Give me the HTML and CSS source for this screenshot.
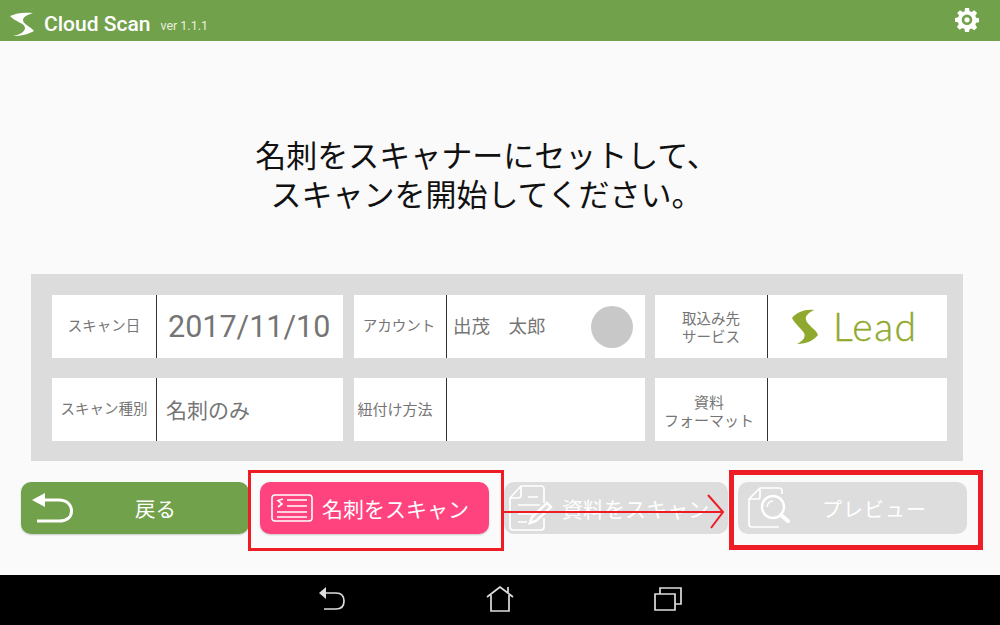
FILE: index.html
```html
<!DOCTYPE html>
<html lang="ja">
<head>
<meta charset="utf-8">
<title>Cloud Scan</title>
<link rel="stylesheet" href="styles.css">
</head>
<body>
<div class="screen">
  <header class="topbar">
    <div class="brand">
      <svg class="logo" viewBox="0 0 24 24"><path fill="#fff" d="M0 4 C6 1 14 0 23 1 C17 3 13 5 13 8 C13 12 20 14 24 19 C19 22 11 24 3 24 C9 23 15 20 15 16 C15 11 5 10 0 4 Z"/></svg>
      <span class="app-name">Cloud Scan</span>
      <span class="version">ver 1.1.1</span>
    </div>
    <svg class="gear" viewBox="0 0 24 24"><path fill="#fff" fill-rule="evenodd" d="M10 0h4l.6 3.2 2 .8L19.300 2.200l2.800 2.800-1.800 2.700.8 2 3.200.6v3.800l-3.200.6-.8 2 1.800 2.700-2.800 2.800-2.700-1.800-2 .8L14 24h-4l-.6-3.200-2-.8-2.700 1.800-2.800-2.800 1.800-2.700-.8-2L0 13.700V9.900l3.200-.6.8-2L2.200 5 5 2.200 7.700 4l2-.8L10 0ZM12 6.500a5.300 5.300 0 1 0 0 10.600a5.300 5.300 0 1 0 0-10.600ZM12 9.200a2.600 2.600 0 1 1 0 5.200a2.600 2.600 0 1 1 0-5.200Z"/></svg>
  </header>

  <main class="content">
    <h1 class="message">名刺をスキャナーにセットして、<br>スキャンを開始してください。</h1>

    <section class="panel">
      <div class="cell">
        <div class="cell-label">スキャン日</div>
        <div class="cell-value date">2017/11/10</div>
      </div>
      <div class="cell cell-narrow">
        <div class="cell-label">アカウント</div>
        <div class="cell-value name"><span>出茂　太郎</span><i class="avatar"></i></div>
      </div>
      <div class="cell cell-wide">
        <div class="cell-label two-line">取込み先<br>サービス</div>
        <div class="cell-value lead">
          <svg class="lead-mark" viewBox="0 0 26 36"><path fill="#8fa92e" d="M0 9 C5 3 13 0 22 1 C16 4 13 7 14 11 C15 16 24 20 26 26 C22 31 15 35 5 35 C11 32 14 28 12 24 C9 19 3 15 0 9 Z"/></svg>
          <span class="lead-word">Lead</span>
        </div>
      </div>
      <div class="cell">
        <div class="cell-label">スキャン種別</div>
        <div class="cell-value kind">名刺のみ</div>
      </div>
      <div class="cell cell-narrow">
        <div class="cell-label link-label">紐付け方法</div>
        <div class="cell-value"></div>
      </div>
      <div class="cell cell-wide">
        <div class="cell-label two-line format-label">資料<br>フォーマット</div>
        <div class="cell-value"></div>
      </div>
    </section>

    <nav class="actions">
      <button class="btn btn-back">
        <svg class="icon-back" viewBox="0 0 41 30"><path fill="none" stroke="#fff" stroke-width="3" d="M11 7H27C35 7 39.500 12 39.500 18C39.500 24 35 28 27 28H5"/><path fill="#fff" d="M0 7L13 0V14Z"/></svg>
        <span>戻る</span>
      </button>
      <button class="btn btn-scan">
        <svg class="icon-card" viewBox="0 0 42 28"><rect x="1" y="1" width="40" height="26" rx="3" fill="none" stroke="#fff" stroke-width="1.600"/><path fill="none" stroke="#fff" stroke-width="1.600" d="M16 6H36M16 12H36M6 18H36M6 23H36M12 5L7 6.500L11 10L7 13"/></svg>
        <span>名刺をスキャン</span>
      </button>
      <button class="btn btn-off btn-doc">
        <svg class="icon-doc" viewBox="0 0 44 46"><path fill="none" stroke="#fff" stroke-width="1.700" d="M35 18V4C35 2 34 1 32 1H12L1 13V42C1 44 2 45 4 45H32C34 45 35 44 35 42V33M12 1V10C12 12 11 13 9 13H1M19 12H29M9 20H31M9 29H24M9 37H18"/><path fill="none" stroke="#fff" stroke-width="2.500" d="M21 38L23 32L38 18L42 22L27 36Z"/></svg>
        <span>資料をスキャン</span>
      </button>
      <button class="btn btn-off btn-preview">
        <svg class="icon-preview" viewBox="0 0 42 42"><path fill="none" stroke="#fff" stroke-width="1.700" d="M34 7V4C34 2 33 1 31 1H12L1 12V37C1 39 2 40 4 40H31M12 1V10C12 11.500 11 12 10 12H1"/><circle cx="25" cy="20" r="11" fill="none" stroke="#fff" stroke-width="2.500"/><path fill="none" stroke="#fff" stroke-width="1.500" d="M19 20C19 16.500 22 14 25 14"/><path stroke="#fff" stroke-width="4" stroke-linecap="round" d="M33 28L40 34"/></svg>
        <span>プレビュー</span>
      </button>
    </nav>
  </main>

  <footer class="navbar">
    <svg class="nav-back" viewBox="0 0 26 24"><path fill="none" stroke="#ddd" stroke-width="1.700" d="M6 6H17C22 6 25 9 25 14C25 19 22 22 17 22H5"/><path fill="#ddd" d="M0 6L7 0V12Z"/></svg>
    <svg class="nav-home" viewBox="0 0 28 26"><path fill="none" stroke="#ddd" stroke-width="1.700" d="M1 11L14 1L27 11M5 9V25H23V9M22 7V1"/></svg>
    <svg class="nav-recent" viewBox="0 0 28 24"><path fill="none" stroke="#ddd" stroke-width="1.700" d="M1 7H21V23H1ZM6 7V1H27V17H21"/></svg>
  </footer>

  <div class="mark mark-scan"></div>
  <div class="mark mark-preview"></div>
  <svg class="mark-arrow" viewBox="0 0 230 50"><path fill="none" stroke="#ee1c25" stroke-width="2" d="M0 25H220M205 8L220 25L208 41"/></svg>
</div>
</body>
</html>
```
FILE: styles.css
```css
* { box-sizing: border-box; }
html, body { margin: 0; padding: 0; }
body { font-family: Roboto, "Noto Sans CJK JP", sans-serif; background: #fafafa; }

.screen {
  position: relative;
  width: 1000px;
  height: 625px;
  display: flex;
  flex-direction: column;
  overflow: hidden;
}

.topbar {
  height: 41px;
  flex: none;
  background: #72a14b;
  display: flex;
  align-items: center;
  justify-content: space-between;
  padding: 0 21px 0 10px;
}
.brand { display: flex; align-items: center; padding-top: 7px; }
.logo { width: 24px; height: 24px; margin-right: 10px; }
.app-name { color: #fff; font-size: 21px; font-weight: 500; margin-right: 10px; }
.version { color: #e6efdd; font-size: 12.500px; margin-top: 3px; }
.gear { width: 24px; height: 24px; margin-top: -1px; }

.content {
  flex: 1;
  display: flex;
  flex-direction: column;
  min-height: 0;
}
.message {
  margin: 96px 0 0;
  height: 137px;
  padding-right: 27px;
  text-align: center;
  font-size: 31px;
  line-height: 39px;
  font-weight: 400;
  color: #111;
}

.panel {
  width: 932px;
  height: 187px;
  margin-left: 31px;
  padding: 21px;
  background: #dcdcdc;
  display: grid;
  grid-template-columns: 291px 292px 292px;
  grid-template-rows: 63px 63px;
  column-gap: 10px;
  row-gap: 20px;
}
.cell { background: #fff; display: flex; min-width: 0; }
.cell-label {
  width: 105px;
  flex: none;
  display: flex;
  align-items: center;
  justify-content: center;
  text-align: center;
  font-size: 14.500px;
  line-height: 18px;
  color: #757575;
  border-right: 1px solid #333;
}
.cell-narrow { margin-left: 1px; }
.cell-narrow .cell-label { width: 93px; padding-right: 2px; }
.cell-narrow .link-label { font-size: 15px; padding-right: 10px; white-space: nowrap; }
.cell-wide .cell-label { width: 113px; }
.cell-wide .format-label { font-size: 15px; padding-right: 4px; }
.two-line { padding-top: 4px; }
.cell-value {
  flex: 1;
  display: flex;
  align-items: center;
  color: #757575;
  min-width: 0;
}
.date { font-size: 30.500px; padding-left: 11px; }
.kind { font-size: 21px; padding: 0 0 2px 9px; }
.name { font-size: 18.500px; padding: 0 12px 0 6px; justify-content: space-between; }
.name span { margin-bottom: 3px; }
.avatar { width: 42px; height: 42px; border-radius: 50%; background: #c8c8c8; display: block; }
.lead { padding-left: 24px; }
.lead-mark { width: 26px; height: 36px; margin-right: 15px; }
.lead-word {
  font-family: "Lato", "Liberation Sans", sans-serif;
  font-size: 39px;
  font-weight: 300;
  color: #8fa92e;
  -webkit-text-stroke: .4px #8fa92e;
  letter-spacing: 1.500px;
  line-height: 1;
}

.actions {
  display: flex;
  margin-top: 21px;
  margin-left: 21px;
  height: 52px;
}
.btn {
  position: relative;
  height: 52px;
  border: 0;
  border-radius: 10px;
  padding: 0;
  color: #fff;
  font-family: inherit;
  font-size: 21px;
  display: flex;
  align-items: center;
  box-shadow: 0 1px 2px rgba(0, 0, 0, .2);
}
.btn-back { width: 228px; background: #72a14b; margin-right: 11px; padding-left: 11px; font-size: 20.500px; }
.btn-scan { width: 229px; background: #ff437f; margin-right: 15px; padding-left: 11px; }
.btn-doc { width: 224px; margin-right: 10px; padding-left: 5px; }
.btn-preview { width: 229px; padding-left: 10px; font-size: 20px; }
.btn-off { background: #ddd; box-shadow: none; }
.icon-back { width: 41px; height: 30px; margin-right: 62px; }
.icon-card { width: 42px; height: 28px; margin-right: 9px; }
.icon-doc { width: 44px; height: 46px; margin-right: 9px; }
.icon-preview { width: 42px; height: 42px; margin-right: 32px; }
.btn-doc span { white-space: nowrap; }
.btn-preview span { letter-spacing: 1px; }

.navbar {
  height: 50px;
  flex: none;
  background: #000;
  position: relative;
  display: flex;
  align-items: center;
  padding-left: 319px;
}
.nav-back { width: 26px; height: 24px; margin-right: 141px; margin-top: -2px; }
.nav-home { width: 28px; height: 26px; margin-right: 140px; margin-top: -2px; }
.nav-recent { width: 28px; height: 24px; margin-top: -2px; }

.mark { position: absolute; border: 3px solid #ee1c25; }
.mark-scan { left: 248px; top: 470px; width: 256px; height: 81px; }
.mark-preview { left: 729px; top: 470px; width: 254px; height: 80px; border-width: 5px; }
.mark-arrow { position: absolute; left: 503px; top: 487px; width: 230px; height: 50px; }
```
